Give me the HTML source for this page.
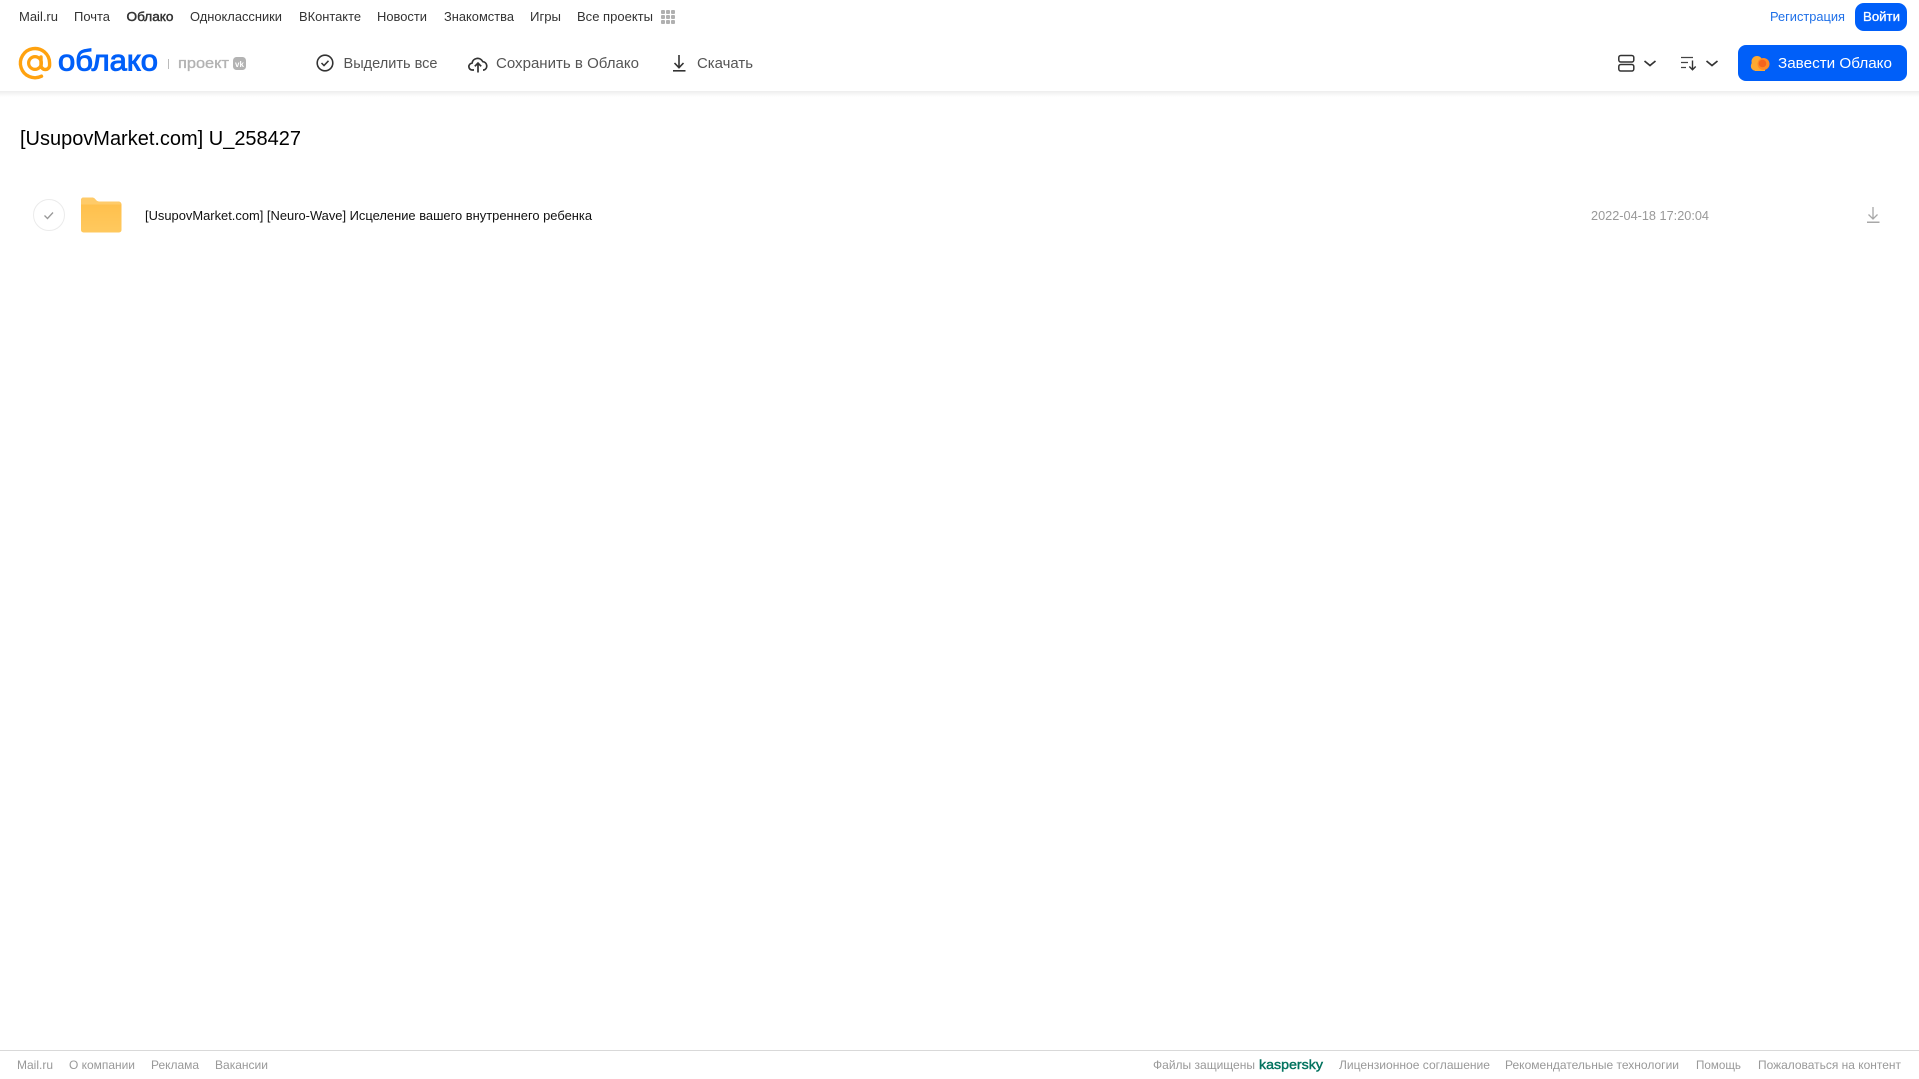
<!DOCTYPE html>
<html lang="ru">
<head>
<meta charset="utf-8">
<title>Облако</title>
<style>
html,body{margin:0;padding:0;width:1919px;height:1079px;overflow:hidden;background:#fff}
svg{display:block;position:absolute;left:0;top:0}
text{font-family:"Liberation Sans",Arial,sans-serif}
.n{font-size:13px;fill:#333}
.t{font-size:15px;fill:#555}
.f{font-size:12px;fill:#999}
</style>
</head>
<body>
<svg width="1919" height="1079" viewBox="0 0 1919 1079" xmlns="http://www.w3.org/2000/svg">
<defs>
<linearGradient id="sh" x1="0" y1="0" x2="0" y2="1"><stop offset="0" stop-color="#eeeeee"/><stop offset="1" stop-color="#fff"/></linearGradient>
<linearGradient id="fo" x1="0" y1="0" x2="0" y2="1"><stop offset="0" stop-color="#ffbe48"/><stop offset="1" stop-color="#ffc95f"/></linearGradient>
</defs>
<rect x="0" y="91" width="1919" height="6" fill="url(#sh)"/>

<!-- top nav -->
<text class="n" x="19" y="21" textLength="39" lengthAdjust="spacingAndGlyphs">Mail.ru</text>
<text class="n" x="74" y="21" textLength="36" lengthAdjust="spacingAndGlyphs">Почта</text>
<text class="n" x="126.500" y="21" textLength="47" lengthAdjust="spacingAndGlyphs" stroke="#333" stroke-width=".45">Облако</text>
<text class="n" x="190" y="21" textLength="92" lengthAdjust="spacingAndGlyphs">Одноклассники</text>
<text class="n" x="299" y="21" textLength="62" lengthAdjust="spacingAndGlyphs">ВКонтакте</text>
<text class="n" x="377" y="21" textLength="50" lengthAdjust="spacingAndGlyphs">Новости</text>
<text class="n" x="444" y="21" textLength="70" lengthAdjust="spacingAndGlyphs">Знакомства</text>
<text class="n" x="530" y="21" textLength="31" lengthAdjust="spacingAndGlyphs">Игры</text>
<text class="n" x="577" y="21" textLength="76" lengthAdjust="spacingAndGlyphs">Все проекты</text>
<g fill="#b0b0b0">
<rect x="661" y="10" width="4" height="4" rx="1"/><rect x="666" y="10" width="4" height="4" rx="1"/><rect x="671" y="10" width="4" height="4" rx="1"/>
<rect x="661" y="15" width="4" height="4" rx="1"/><rect x="666" y="15" width="4" height="4" rx="1"/><rect x="671" y="15" width="4" height="4" rx="1"/>
<rect x="661" y="20" width="4" height="4" rx="1"/><rect x="666" y="20" width="4" height="4" rx="1"/><rect x="671" y="20" width="4" height="4" rx="1"/>
</g>
<text x="1770" y="21" font-size="13" fill="#1f70e8" textLength="75" lengthAdjust="spacingAndGlyphs">Регистрация</text>
<rect x="1855" y="3" width="52" height="28" rx="9" fill="#005ff9"/>
<text x="1863" y="21" font-size="13" fill="#fff" stroke="#fff" stroke-width=".3" textLength="37" lengthAdjust="spacingAndGlyphs">Войти</text>

<!-- logo -->
<path d="M41.500 76.200A14.600 14.600 0 1 1 49.600 63v2.200a4.300 4.300 0 0 1-8.600 0V57" fill="none" stroke="#ffa20f" stroke-width="3.400" stroke-linecap="round"/>
<circle cx="35" cy="63" r="6.400" fill="none" stroke="#ffa20f" stroke-width="3.200"/>
<text x="58" y="70.500" font-size="30" fill="#005ff9" stroke="#005ff9" stroke-width="1" textLength="100" lengthAdjust="spacingAndGlyphs">облако</text>
<rect x="168" y="59" width="1" height="10" fill="#bbb"/>
<text x="178" y="68" font-size="15" fill="#b3b3b3" stroke="#b3b3b3" stroke-width=".35" textLength="51" lengthAdjust="spacingAndGlyphs">проект</text>
<rect x="233" y="57" width="13" height="13" rx="3.500" fill="#b3b3b3"/>
<text x="235" y="67" font-size="8" fill="#fff" font-weight="700">vk</text>

<!-- toolbar -->
<circle cx="325" cy="63" r="7.800" fill="none" stroke="#333" stroke-width="1.600"/>
<path d="M321.500 63l2.500 2.500 4.500-4.700" fill="none" stroke="#333" stroke-width="1.500"/>
<text class="t" x="343.500" y="68" textLength="94" lengthAdjust="spacingAndGlyphs">Выделить все</text>
<path d="M474 70h-1.500a3.400 3.400 0 0 1-.5-6.800 5.700 5.700 0 0 1 10.800-1.500 4.300 4.300 0 0 1 1.200 8.300h-1" fill="none" stroke="#333" stroke-width="1.700" stroke-linejoin="round"/>
<path d="M478 72.500v-9M474.800 66.300l3.200-3.200 3.200 3.200" fill="none" stroke="#333" stroke-width="1.700"/>
<text class="t" x="496" y="68" textLength="143" lengthAdjust="spacingAndGlyphs">Сохранить в Облако</text>
<path d="M679 55v12.500M674.500 63l4.500 4.700 4.500-4.700" fill="none" stroke="#333" stroke-width="1.600"/>
<rect x="673" y="70" width="12.500" height="1.600" fill="#333"/>
<text class="t" x="697" y="68" textLength="56" lengthAdjust="spacingAndGlyphs">Скачать</text>

<!-- right controls -->
<rect x="1618.800" y="55.500" width="15" height="6.500" rx="2" fill="none" stroke="#333" stroke-width="1.500"/>
<rect x="1618.800" y="64.500" width="15" height="6.500" rx="2" fill="none" stroke="#333" stroke-width="1.500"/>
<path d="M1644.500 61l5.500 4.500 5.500-4.500" fill="none" stroke="#333" stroke-width="1.700"/>
<path d="M1681 57.500h12M1681 62.500h7M1681 67.500h5" stroke="#444" stroke-width="1.200" fill="none"/>
<path d="M1692.500 60.500v9M1689.300 66.500l3.200 3.200 3.200-3.200" stroke="#333" stroke-width="1.400" fill="none"/>
<path d="M1706.500 61l5.500 4.500 5.500-4.500" fill="none" stroke="#333" stroke-width="1.700"/>
<rect x="1738" y="45" width="169" height="36" rx="8" fill="#005ff9"/>
<circle cx="1757" cy="61.500" r="5.500" fill="#ffa930"/>
<circle cx="1755.500" cy="66" r="4.700" fill="#ffa930"/>
<rect x="1755" y="62" width="10" height="9" fill="#ffa930"/>
<circle cx="1763.500" cy="64" r="6" fill="#ff8a26"/>
<circle cx="1762.500" cy="63.500" r="3.800" fill="#f5641e"/>
<text x="1778" y="68" font-size="15" fill="#fff" textLength="114" lengthAdjust="spacingAndGlyphs">Завести Облако</text>

<!-- title -->
<text x="20" y="145" font-size="20" fill="#000" textLength="281" lengthAdjust="spacingAndGlyphs">[UsupovMarket.com] U_258427</text>

<!-- row -->
<circle cx="49" cy="215" r="15.500" fill="#fff" stroke="#ebebeb"/>
<path d="M44.500 215.500l3 3 5.500-6" fill="none" stroke="#999" stroke-width="1.300"/>
<path d="M81 200a2.500 2.500 0 0 1 2.500-2.500h8c2 0 3 .7 4 2s2 2 3.500 2h19.500a3 3 0 0 1 3 3v25.500a2.500 2.500 0 0 1-2.500 2.500h-35.500a2.500 2.500 0 0 1-2.500-2.500z" fill="url(#fo)"/>
<path d="M81 204.500v-4.500a2.500 2.500 0 0 1 2.500-2.500h8c2 0 3 .7 4 2s2 2 3.500 2h19.500a3 3 0 0 1 2.500 3z" fill="#ffcb69"/>
<text x="145" y="220" font-size="13" fill="#111" textLength="447" lengthAdjust="spacingAndGlyphs">[UsupovMarket.com] [Neuro-Wave] Исцеление вашего внутреннего ребенка</text>
<text x="1591" y="220" font-size="13" fill="#999" textLength="118" lengthAdjust="spacingAndGlyphs">2022-04-18 17:20:04</text>
<path d="M1873 207v12M1868.500 214.500l4.500 4.500 4.500-4.500" fill="none" stroke="#a8a8a8" stroke-width="1.300"/>
<rect x="1867" y="221.500" width="12.500" height="1.500" fill="#a8a8a8"/>

<!-- footer -->
<rect x="0" y="1050" width="1919" height="1" fill="#d9d9d9"/>
<text class="f" x="17" y="1069" textLength="36" lengthAdjust="spacingAndGlyphs">Mail.ru</text>
<text class="f" x="69" y="1069" textLength="66" lengthAdjust="spacingAndGlyphs">О компании</text>
<text class="f" x="151" y="1069" textLength="48" lengthAdjust="spacingAndGlyphs">Реклама</text>
<text class="f" x="215" y="1069" textLength="53" lengthAdjust="spacingAndGlyphs">Вакансии</text>
<text class="f" x="1153" y="1069" textLength="102" lengthAdjust="spacingAndGlyphs">Файлы защищены</text>
<text x="1259" y="1069" font-size="13" fill="#00725e" stroke="#00725e" stroke-width=".4" textLength="64" lengthAdjust="spacingAndGlyphs">kaspersky</text>
<text class="f" x="1339" y="1069" textLength="151" lengthAdjust="spacingAndGlyphs">Лицензионное соглашение</text>
<text class="f" x="1505" y="1069" textLength="174" lengthAdjust="spacingAndGlyphs">Рекомендательные технологии</text>
<text class="f" x="1696" y="1069" textLength="45" lengthAdjust="spacingAndGlyphs">Помощь</text>
<text class="f" x="1758" y="1069" textLength="143" lengthAdjust="spacingAndGlyphs">Пожаловаться на контент</text>
</svg>
</body>
</html>
